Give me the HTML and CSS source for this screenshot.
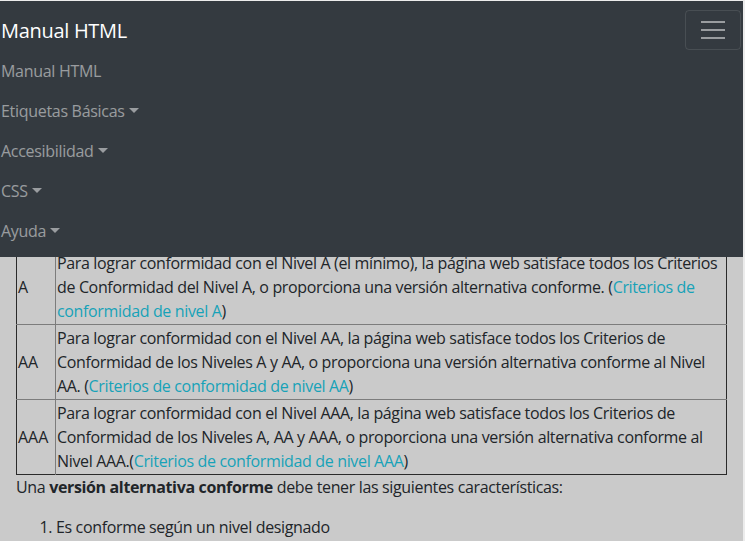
FILE: index.html
```html
<!DOCTYPE html>
<html lang="es">
<head>
<meta charset="utf-8">
<title>Manual HTML - Accesibilidad</title>
<link rel="stylesheet" href="styles.css">
</head>
<body>
<nav class="navbar">
  <a class="brand" href="#">Manual HTML</a>
  <button class="toggler" type="button" aria-label="Menú">
    <span class="toggler-icon"><i></i><i></i><i></i></span>
  </button>
  <ul class="nav">
    <li><a class="nav-link" href="#">Manual HTML</a></li>
    <li><a class="nav-link dropdown" href="#">Etiquetas Básicas</a></li>
    <li><a class="nav-link dropdown" href="#">Accesibilidad</a></li>
    <li><a class="nav-link dropdown" href="#">CSS</a></li>
    <li><a class="nav-link dropdown" href="#">Ayuda</a></li>
  </ul>
</nav>

<main class="content">
  <table class="levels">
    <tbody>
      <tr>
        <td class="level">A</td>
        <td>Para lograr conformidad con el Nivel A (el mínimo), la página web satisface todos los Criterios de Conformidad del Nivel A, o proporciona una versión alternativa conforme. (<a href="#">Criterios de conformidad de nivel A</a>)</td>
      </tr>
      <tr>
        <td class="level">AA</td>
        <td>Para lograr conformidad con el Nivel AA, la página web satisface todos los Criterios de Conformidad de los Niveles A y AA, o proporciona una versión alternativa conforme al Nivel AA. (<a href="#">Criterios de conformidad de nivel AA</a>)</td>
      </tr>
      <tr>
        <td class="level">AAA</td>
        <td>Para lograr conformidad con el Nivel AAA, la página web satisface todos los Criterios de Conformidad de los Niveles A, AA y AAA, o proporciona una versión alternativa conforme al Nivel AAA.(<a href="#">Criterios de conformidad de nivel AAA</a>)</td>
      </tr>
    </tbody>
  </table>
  <p class="text">Una <strong>versión alternativa conforme</strong> debe tener las siguientes características:</p>
  <ol class="list">
    <li>Es conforme según un nivel designado</li>
  </ol>
</main>
</body>
</html>
```
FILE: styles.css
```css
html {
  background: #ececec;
}

body {
  margin: 1px 2px 0 0;
  background: #cacaca;
  color: #212529;
  font-family: "Open Sans", "Noto Sans", sans-serif;
  font-size: 16px;
  line-height: 24px;
  letter-spacing: -0.35px;
  min-height: 540px;
}

a {
  color: #17a2b8;
  text-decoration: none;
}

/* Navbar (fixed, overlays the page) */
.navbar {
  position: fixed;
  top: 1px;
  left: 0;
  right: 2px;
  z-index: 10;
  background: #343a40;
  display: flex;
  flex-wrap: wrap;
  align-items: center;
  padding: 9px 2px 7px 1px;
  letter-spacing: -0.3px;
}

.brand {
  color: #fff;
  font-size: 20px;
  line-height: 30px;
  padding: 6px 0 4px;
}

.toggler {
  margin-left: auto;
  width: 56px;
  height: 40px;
  padding: 0;
  background: transparent;
  border: 1px solid rgba(255, 255, 255, 0.1);
  border-radius: 4px;
  display: flex;
  align-items: center;
  justify-content: center;
}

.toggler-icon {
  width: 24px;
  display: flex;
  flex-direction: column;
  gap: 6px;
}

.toggler-icon i {
  display: block;
  height: 2px;
  background: rgba(255, 255, 255, 0.5);
}

.nav {
  flex-basis: 100%;
  list-style: none;
  margin: 0;
  padding: 0;
}

.nav-link {
  display: block;
  padding: 9px 0 7px;
  line-height: 24px;
  color: rgba(255, 255, 255, 0.5);
}

.dropdown::after {
  content: "";
  display: inline-block;
  margin-left: 4px;
  vertical-align: 4px;
  border-top: 5px solid;
  border-left: 5px solid transparent;
  border-right: 5px solid transparent;
}

/* Content */
.content {
  padding: 248px 16px 0;
}

.levels {
  width: 100%;
  border-collapse: collapse;
  border: 1px solid #2a2a2a;
}

.levels td {
  padding: 1px;
  text-align: left;
  vertical-align: middle;
  border: 1px solid #7c7c7c;
}

.levels .level {
  width: 36px;
  letter-spacing: 0;
}

.levels tr > :first-child {
  border-left-style: none;
}

.levels tr > :last-child {
  border-right-style: none;
}

.levels tr:first-child td {
  border-top-style: none;
}

.levels tr:last-child td {
  border-bottom-style: none;
}

.text {
  margin: 0 0 16px;
}

.list {
  margin: 0;
  padding-left: 40px;
}
```
